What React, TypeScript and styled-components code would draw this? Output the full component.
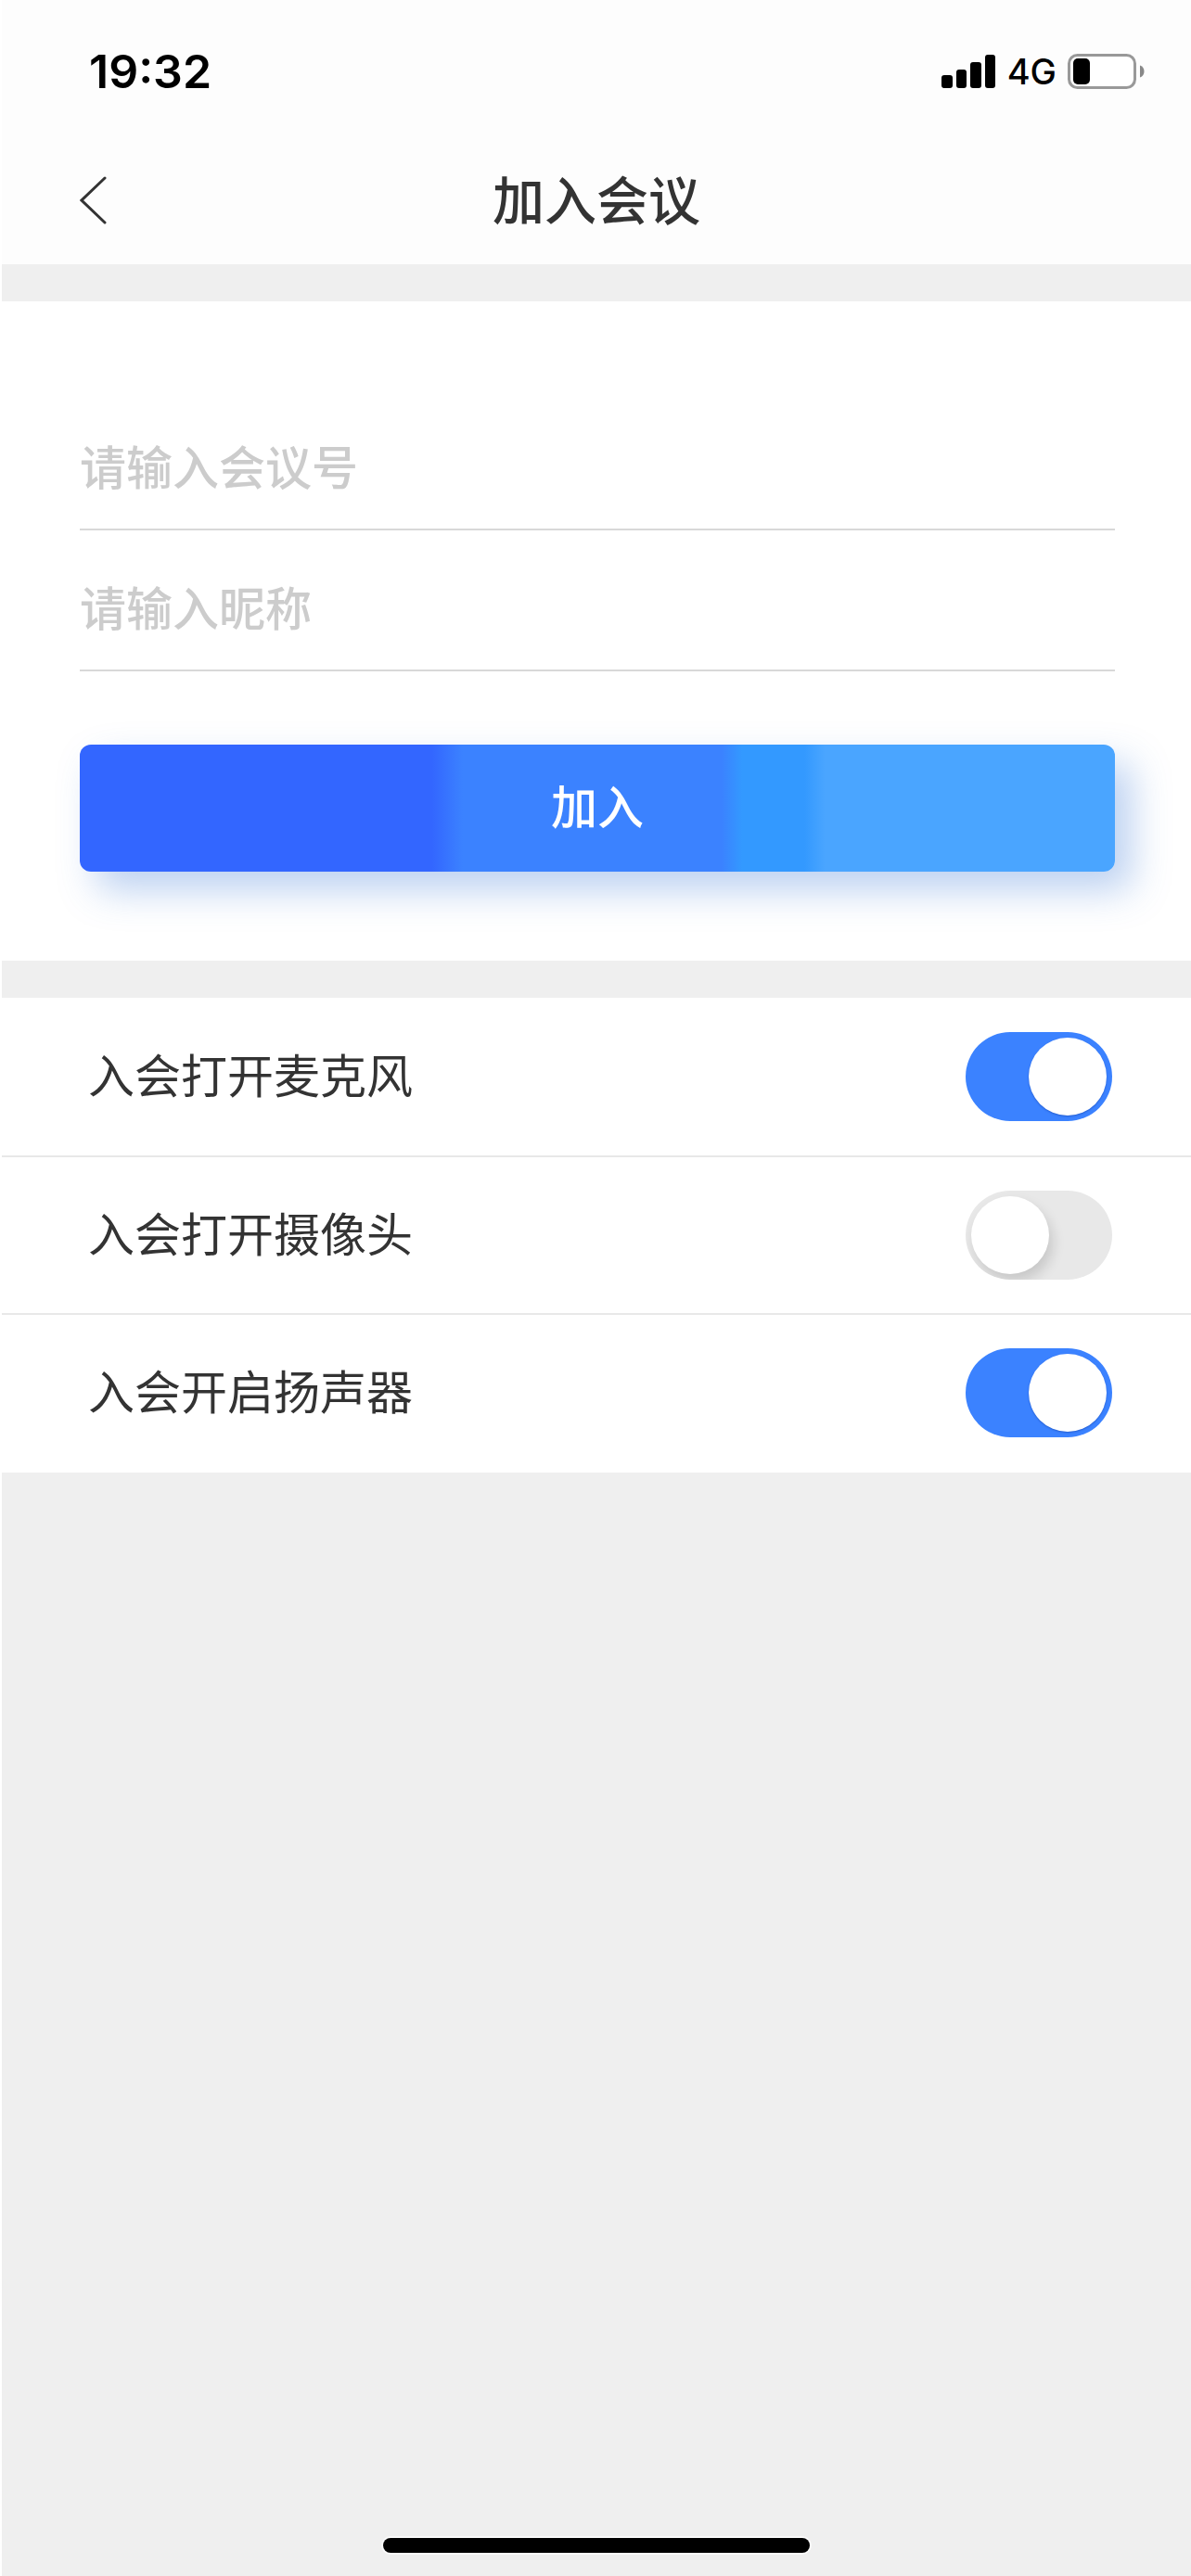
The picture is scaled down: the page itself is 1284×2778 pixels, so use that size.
import React, { useState } from 'react';
import styled, { createGlobalStyle } from 'styled-components';

const GlobalStyle = createGlobalStyle`
  *, *::before, *::after { box-sizing: border-box; }
  body {
    margin: 0;
    background: #efefef;
    color: #333;
    font-family: Inter, "Noto Sans CJK SC", sans-serif;
  }
  button, input { font: inherit; }
`;

const Page = styled.div`
  display: flex;
  flex-direction: column;
  min-height: 100vh;
  border-left: 2px solid #fff;
  background: #efefef;
`;

const Header = styled.header`
  background: #fdfdfd;
`;

const StatusBar = styled.div`
  display: flex;
  align-items: center;
  justify-content: space-between;
  height: 154px;
  padding: 0 50px 0 94px;
  color: #000;
`;

const Time = styled.time`
  font-size: 50px;
  line-height: 60px;
  font-weight: 600;
`;

const Indicators = styled.div`
  display: flex;
  align-items: center;
  gap: 12px;
  font-size: 38px;
  line-height: 44px;
  font-weight: 500;
`;

const NavBar = styled.div`
  display: grid;
  grid-template-columns: 1fr auto 1fr;
  align-items: center;
  height: 131px;
  padding: 0 76px 6px;
`;

const BackButton = styled.button`
  display: flex;
  width: 48px;
  padding: 8px;
  border: 0;
  background: none;
  color: #333;
  cursor: pointer;
`;

const Title = styled.h1`
  margin: 0;
  font-size: 56px;
  line-height: 84px;
  font-weight: 500;
`;

const Form = styled.form`
  display: flex;
  flex-direction: column;
  margin: 40px 0;
  padding: 95px 82px 96px 84px;
  background: #fff;
`;

const TextField = styled.input`
  width: 100%;
  height: 152px;
  padding: 20px 0 0;
  border: 0;
  border-bottom: 2px solid #d8d8d8;
  border-radius: 0;
  outline: 0;
  background: none;
  color: #333;
  font-size: 50px;
  font-weight: 500;
  &::placeholder { color: #ccc; opacity: 1; }
`;

const JoinButton = styled.button`
  height: 137px;
  margin-top: 79px;
  padding: 0 0 10px;
  border: 0;
  border-radius: 12px;
  background: linear-gradient(
    90deg,
    #3366ff 34%, #3b82ff 37%,
    #3b82ff 62%, #3399ff 64%,
    #3399ff 70%, #4aa5ff 72%
  );
  box-shadow: 18px 20px 40px rgba(58, 120, 215, 0.34);
  color: #fff;
  font-size: 50px;
  font-weight: 500;
  cursor: pointer;
`;

const Settings = styled.div`
  padding-bottom: 2px;
  background: #fff;
`;

const SettingRow = styled.label`
  display: flex;
  align-items: center;
  justify-content: space-between;
  height: 170px;
  padding: 0 85px 0 93px;
  font-size: 50px;
  line-height: 72px;
  & + & { border-top: 2px solid #e8e8e8; }
`;

const Switch = styled.input`
  appearance: none;
  display: flex;
  align-items: center;
  width: 158px;
  height: 96px;
  margin: 0;
  padding: 0 6px;
  border-radius: 48px;
  overflow: hidden;
  background: #e8e8e8;
  cursor: pointer;
  &::before {
    content: "";
    width: 84px;
    height: 84px;
    border-radius: 50%;
    background: #fff;
    box-shadow: 4px 8px 14px rgba(0, 0, 0, 0.14);
  }
  &:checked { justify-content: flex-end; background: #3b82ff; }
  &:checked::before { box-shadow: 0 1px 2px rgba(0, 40, 140, 0.4); }
`;

const HomeIndicator = styled.div`
  width: 460px;
  max-width: 60%;
  height: 16px;
  margin: auto auto 25px;
  border-radius: 8px;
  background: #000;
  box-shadow: 0 0 0 2px #fafafa;
`;

function SignalIcon() {
  return (
    <svg width="59" height="37" viewBox="0 0 59 37" aria-hidden="true">
      <rect x="0" y="22" width="12" height="14" rx="3" />
      <rect x="16" y="16" width="11" height="20" rx="3" />
      <rect x="31" y="8" width="12" height="28" rx="3" />
      <rect x="47" y="0" width="11" height="36" rx="3" />
    </svg>
  );
}

function BatteryIcon() {
  return (
    <svg width="83" height="38" viewBox="0 0 83 38" aria-hidden="true">
      <rect x="1.5" y="1.5" width="71" height="35" rx="9" fill="#fff" stroke="#999" strokeWidth="3" />
      <rect x="6" y="5" width="18" height="28" rx="5" />
      <path d="M78 12.500c6 2 6 11 0 13z" fill="#888" />
    </svg>
  );
}

const settings = [
  { id: 'microphone', label: '入会打开麦克风', on: true },
  { id: 'camera', label: '入会打开摄像头', on: false },
  { id: 'speaker', label: '入会开启扬声器', on: true },
];

export default function App() {
  const [enabled, setEnabled] = useState<Record<string, boolean>>(
    Object.fromEntries(settings.map((s) => [s.id, s.on])),
  );

  return (
    <Page>
      <GlobalStyle />
      <Header>
        <StatusBar>
          <Time>19:32</Time>
          <Indicators>
            <SignalIcon />
            <span>4G</span>
            <BatteryIcon />
          </Indicators>
        </StatusBar>
        <NavBar>
          <BackButton type="button" aria-label="返回">
            <svg width="32" height="54" viewBox="0 0 32 54" fill="none" stroke="currentColor" strokeWidth="3" strokeLinecap="round">
              <path d="M27 2L2 26L27 50" />
            </svg>
          </BackButton>
          <Title>加入会议</Title>
        </NavBar>
      </Header>
      <main>
        <Form onSubmit={(e) => e.preventDefault()}>
          <TextField aria-label="会议号" placeholder="请输入会议号" />
          <TextField aria-label="昵称" placeholder="请输入昵称" />
          <JoinButton type="submit">加入</JoinButton>
        </Form>
        <Settings>
          {settings.map(({ id, label }) => (
            <SettingRow key={id} htmlFor={id}>
              {label}
              <Switch
                id={id}
                type="checkbox"
                role="switch"
                checked={enabled[id]}
                onChange={(e) => setEnabled({ ...enabled, [id]: e.target.checked })}
              />
            </SettingRow>
          ))}
        </Settings>
      </main>
      <HomeIndicator />
    </Page>
  );
}
